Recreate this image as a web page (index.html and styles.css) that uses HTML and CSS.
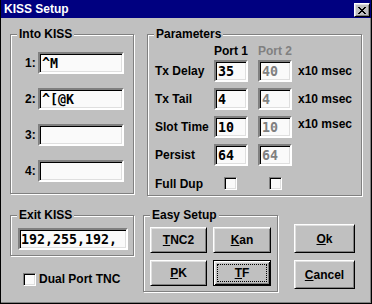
FILE: index.html
```html
<!DOCTYPE html>
<html lang="en">
<head>
  <meta charset="UTF-8" />
  <meta name="viewport" content="width=device-width, initial-scale=1" />
  <title>KISS Setup</title>
  <link rel="stylesheet" href="styles.css">
</head>
<body>
  <div class="window">
    <div class="titlebar">
      <span class="title">KISS Setup</span>
      <button class="close" aria-label="Close">
        <svg width="8" height="7" viewBox="0 0 8 7" shape-rendering="crispEdges">
          <path fill="#000" d="M0 0h2v1h-2z M6 0h2v1h-2z M1 1h2v1h-2z M5 1h2v1h-2z M2 2h4v1h-4z M3 3h2v1h-2z M2 4h4v1h-4z M1 5h2v1h-2z M5 5h2v1h-2z M0 6h2v1h-2z M6 6h2v1h-2z"/>
        </svg>
      </button>
    </div>

    <div class="dialog">
      <div class="row top-row">
        <div class="group into-kiss">
          <span class="group-title">Into KISS</span>
          <div class="kiss-line"><label>1:</label><input class="field wide" value="^M"></div>
          <div class="kiss-line"><label>2:</label><input class="field wide" value="^[@K"></div>
          <div class="kiss-line"><label>3:</label><input class="field wide" value=""></div>
          <div class="kiss-line"><label>4:</label><input class="field wide" value=""></div>
        </div>

        <div class="group params">
          <span class="group-title">Parameters</span>
          <div class="param-row head">
            <span class="param-label"></span>
            <span class="port">Port 1</span>
            <span class="port off">Port 2</span>
          </div>
          <div class="param-row">
            <span class="param-label">Tx Delay</span>
            <input class="field small" value="35">
            <input class="field small" value="40" disabled>
            <span class="unit">x10 msec</span>
          </div>
          <div class="param-row">
            <span class="param-label">Tx Tail</span>
            <input class="field small" value="4">
            <input class="field small" value="4" disabled>
            <span class="unit">x10 msec</span>
          </div>
          <div class="param-row">
            <span class="param-label">Slot Time</span>
            <input class="field small" value="10">
            <input class="field small" value="10" disabled>
            <span class="unit raised">x10 msec</span>
          </div>
          <div class="param-row">
            <span class="param-label">Persist</span>
            <input class="field small" value="64">
            <input class="field small" value="64" disabled>
          </div>
          <div class="param-row dup">
            <span class="param-label">Full Dup</span>
            <span class="port-check"><input type="checkbox" class="check"></span>
            <span class="port-check second"><input type="checkbox" class="check"></span>
          </div>
        </div>
      </div>

      <div class="row bottom-row">
        <div class="left-col">
          <div class="group exit-kiss">
            <span class="group-title">Exit KISS</span>
            <input class="field exit" value="192,255,192,">
          </div>
          <label class="check-line"><input type="checkbox" class="check"> Dual Port TNC</label>
        </div>

        <div class="group easy">
          <span class="group-title">Easy Setup</span>
          <div class="easy-grid">
            <button class="btn"><u>T</u>NC2</button>
            <button class="btn kan"><u>K</u>an</button>
            <button class="btn"><u>P</u>K</button>
            <button class="btn default kan"><u>T</u>F</button>
          </div>
        </div>

        <div class="actions">
          <button class="btn big"><u>O</u>k</button>
          <button class="btn big"><u>C</u>ancel</button>
        </div>
      </div>
    </div>
  </div>
</body>
</html>
```

FILE: styles.css
```css
:root {
  --face: #c0c0c0;
  --shadow: #808080;
  --light: #dfdfdf;
  --navy: #000080;
}

* {
  box-sizing: border-box;
}

body {
  margin: 0;
  font: bold 12px "Liberation Sans", Arial, sans-serif;
  color: #000;
}

.window {
  width: 372px;
  height: 304px;
  background: var(--face);
  border-left: 1px solid #000;
  border-right: 1px solid #000;
  border-bottom: 1px solid #000;
  box-shadow: inset -1px -1px 0 var(--shadow);
}

.titlebar {
  height: 18px;
  background: var(--navy);
  display: flex;
  align-items: center;
  justify-content: space-between;
  padding: 0 1px 0 3px;
}

.title {
  color: #fff;
  line-height: 18px;
}

.close {
  width: 16px;
  height: 14px;
  margin-top: 2px;
  padding: 0;
  display: flex;
  align-items: center;
  justify-content: center;
  background: var(--face);
  border: 1px solid;
  border-color: #fff #000 #000 #fff;
  box-shadow: inset 1px 1px 0 var(--light), inset -1px -1px 0 var(--shadow);
}

.dialog {
  padding: 16px 0 0 9px;
}

.row {
  display: flex;
  align-items: flex-start;
}

/* etched group boxes */
.group {
  position: relative;
  border: 1px solid var(--shadow);
  box-shadow: inset 1px 1px 0 #fff, 1px 1px 0 #fff;
}

.group-title {
  position: absolute;
  top: -7px;
  left: 6px;
  padding: 0 2px;
  line-height: 12px;
  background: var(--face);
}

/* sunken text fields */
.field {
  height: 22px;
  margin: 0;
  padding: 0 1px;
  border: 2px solid;
  border-color: var(--shadow) #fff #fff var(--shadow);
  box-shadow: inset 1px 1px 0 #000, inset -1px -1px 0 var(--light);
  background: #fafafa;
  font: bold 13.3px "DejaVu Sans Mono", "Liberation Mono", monospace;
  color: #000;
  outline: none;
}

.field:disabled {
  color: var(--shadow);
  -webkit-text-fill-color: var(--shadow);
  background: #fafafa;
  opacity: 1;
}

.check {
  appearance: none;
  -webkit-appearance: none;
  width: 13px;
  height: 13px;
  margin: 0;
  border: 1px solid;
  border-color: var(--shadow) #fff #fff var(--shadow);
  box-shadow: inset 1px 1px 0 #000, inset -1px -1px 0 var(--light);
  background: #fafafa;
}

/* Into KISS */
.into-kiss {
  width: 124px;
  height: 160px;
  padding: 17px 0 0 14px;
}

.kiss-line {
  display: flex;
  align-items: center;
  margin-bottom: 14px;
}

.kiss-line label {
  width: 13px;
}

.field.wide {
  width: 86px;
  padding-left: 2px;
}

/* Parameters */
.params {
  width: 215px;
  height: 162px;
  margin-left: 13px;
  padding: 7px 0 0 7px;
}

.param-row {
  display: flex;
  align-items: center;
  margin-bottom: 6px;
}

.param-row.head {
  height: 18px;
  margin-bottom: 0;
}

.param-label {
  width: 59px;
}

.port {
  width: 34px;
}

.port + .port {
  margin-left: 10px;
}

.port.off {
  color: var(--shadow);
}

.field.small {
  width: 34px;
  padding-left: 2px;
}

.field.small + .field.small {
  margin-left: 10px;
}

.unit {
  margin-left: 6px;
}

.unit.raised {
  align-self: flex-start;
  margin-top: 1px;
}

.param-row.dup {
  margin-top: 11px;
  height: 13px;
}

.port-check {
  width: 34px;
  padding-left: 10px;
  display: flex;
}

.port-check.second {
  margin-left: 10px;
  padding-left: 11px;
}

/* bottom row */
.bottom-row {
  margin-top: 19px;
}

.left-col {
  width: 124px;
}

.exit-kiss {
  height: 41px;
  padding: 12px 0 0 7px;
}

.field.exit {
  width: 110px;
}

.check-line {
  display: flex;
  align-items: center;
  gap: 3px;
  margin: 16px 0 0 13px;
}

.easy {
  width: 135px;
  height: 77px;
  margin-left: 9px;
  padding: 11px 0 0 6px;
}

.easy-grid {
  display: grid;
  grid-template-columns: 57px 58px;
  column-gap: 6px;
  row-gap: 7px;
}

.btn {
  height: 26px;
  padding: 0;
  font: inherit;
  color: #000;
  background: var(--face);
  border: 1px solid;
  border-color: #fff #000 #000 #fff;
  box-shadow: inset 1px 1px 0 var(--light), inset -1px -1px 0 var(--shadow);
}

.btn u {
  text-underline-offset: 1px;
}

.btn.default {
  border-color: #000;
  box-shadow: inset 1px 1px 0 #fff, inset -1px -1px 0 #000,
    inset 2px 2px 0 var(--light), inset -2px -2px 0 var(--shadow);
  outline: 1px dotted #000;
  outline-offset: -5px;
}

.actions {
  display: flex;
  flex-direction: column;
  gap: 7px;
  margin-left: 16px;
  padding-top: 9px;
}

.btn.big {
  width: 61px;
  height: 29px;
}
```
